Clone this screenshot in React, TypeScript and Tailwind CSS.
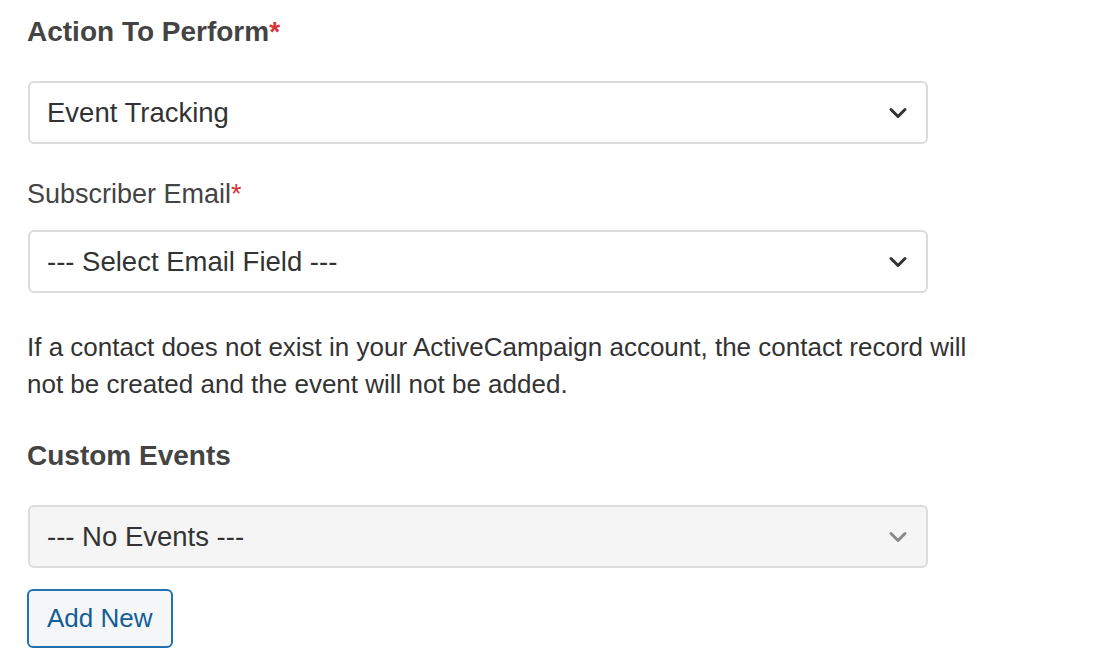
import { ChevronDown } from 'lucide-react';

interface SelectBoxProps {
  value: string;
  disabled?: boolean;
}

const SelectBox = ({ value, disabled }: SelectBoxProps) => (
  <div
    className={`flex h-[63px] w-[900px] items-center justify-between rounded-[6px] border-2 pl-[17px] pr-[14px] ${
      disabled ? 'border-[#dcdcdc] bg-[#f5f5f5]' : 'border-[#dcdcdc] bg-white'
    }`}
  >
    <span className="text-[27.5px] text-[#333]">{value}</span>
    <ChevronDown
      className={disabled ? 'text-[#8a8a8a]' : 'text-[#333]'}
      size={28}
      strokeWidth={2.6}
    />
  </div>
);

const Required = () => <span className="text-[#d63638]">*</span>;

export default function App() {
  return (
    <div
      className="min-h-screen bg-white pl-[27px] pt-[14px] text-[#444]"
      style={{ fontFamily: '"Liberation Sans", Arial, sans-serif' }}
    >
      <h2 className="text-[28px] font-bold leading-[36px]">
        Action To Perform
        <Required />
      </h2>

      <div className="mt-[31px] ml-[1px]">
        <SelectBox value="Event Tracking" />
      </div>

      <label className="mt-[32px] block text-[27px] leading-[36px]">
        Subscriber Email
        <Required />
      </label>

      <div className="mt-[18px] ml-[1px]">
        <SelectBox value="--- Select Email Field ---" />
      </div>

      <p className="mt-[36px] w-[980px] text-[26px] leading-[37px] text-[#333]">
        If a contact does not exist in your ActiveCampaign account, the contact record will not be created and the
        event will not be added.
      </p>

      <h2 className="mt-[35px] text-[28px] font-bold leading-[36px]">Custom Events</h2>

      <div className="mt-[31px] ml-[1px]">
        <SelectBox value="--- No Events ---" disabled />
      </div>

      <button className="mt-[21px] h-[59px] rounded-[6px] border-2 border-[#2271b1] bg-[#f4f6f8] px-[18px] text-[26px] text-[#135e96]">
        Add New
      </button>
    </div>
  );
}
